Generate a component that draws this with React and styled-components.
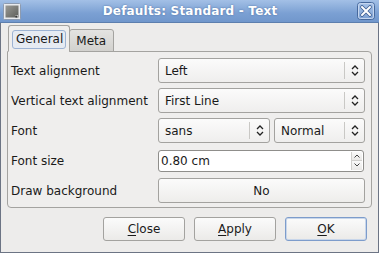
import React from "react";
import styled, { createGlobalStyle } from "styled-components";

const GlobalStyle = createGlobalStyle`
  html, body {
    margin: 0;
    padding: 0;
    background: #ecebea;
  }
  body {
    font-family: "DejaVu Sans", "Liberation Sans", sans-serif;
    font-size: 12px;
    color: #1a1a1a;
  }
`;

const Window = styled.div`
  width: 379px;
  height: 253px;
  box-sizing: border-box;
  border: 1px solid #6c7484;
  border-top: none;
  background: #edeceb;
  display: flex;
  flex-direction: column;
`;

const TitleBar = styled.div`
  height: 22px;
  margin: 0 -1px;
  background: linear-gradient(#a3c0e6, #7ba0d3 60%, #7197cc);
  border-bottom: 1px solid #5d7fae;
  display: flex;
  align-items: center;
  padding: 0 4px 0 3px;
  gap: 4px;
`;

const TitleText = styled.div`
  flex: 1;
  text-align: center;
  color: #fff;
  font-weight: bold;
  font-size: 12px;
  letter-spacing: 0.2px;
  text-shadow: 0 0 2px #4b6d9f;
  padding-left: 2px;
`;

const Body = styled.div`
  flex: 1;
  padding: 2px 6px 0 6px;
  display: flex;
  flex-direction: column;
`;

const TabBar = styled.div`
  display: flex;
  align-items: flex-end;
  padding-left: 1px;
  height: 27px;
  margin-bottom: -1px;
  position: relative;
  z-index: 1;
`;

const Tab = styled.div`
  box-sizing: border-box;
  height: ${(p) => (p.$active ? "27px" : "23px")};
  padding: ${(p) => (p.$active ? "4px 3px 2px 3px" : "4px 7px 0 6px")};
  border: 1px solid #a4a3a0;
  border-bottom: ${(p) => (p.$active ? "1px solid #efeeed" : "1px solid #a4a3a0")};
  border-radius: 3px 3px 0 0;
  background: ${(p) =>
    p.$active ? "#efeeed" : "linear-gradient(#e4e3e1, #d2d1ce)"};
  font-size: 12px;
  margin-left: ${(p) => (p.$active ? "0" : "-1px")};
`;

const TabFocus = styled.div`
  border: 1px solid #9db3d3;
  border-radius: 3px;
  background: #e6ebf2;
  padding: 1px 2px 2px 3px;
`;

const Panel = styled.div`
  box-sizing: border-box;
  height: 157px;
  border: 1px solid #a4a3a0;
  border-radius: 0 4px 4px 4px;
  background: #efeeed;
  padding: 6px 6px 0 3px;
  display: grid;
  grid-template-columns: 147px 1fr;
  grid-auto-rows: 25px;
  row-gap: 5px;
  align-items: center;
`;

const Label = styled.div`
  font-size: 12px;
  white-space: nowrap;
  padding-top: 1px;
`;

const Controls = styled.div`
  display: flex;
  gap: 4px;
`;

const Combo = styled.div`
  box-sizing: border-box;
  width: ${(p) => p.$w || "207px"};
  height: 25px;
  border: 1px solid #a3a29f;
  border-radius: 3px;
  background: linear-gradient(#fbfbfb, #efeeed);
  display: flex;
  align-items: center;
  font-size: 12px;
`;

const ComboText = styled.div`
  flex: 1;
  padding-left: 6px;
`;

const Sep = styled.div`
  width: 1px;
  height: 17px;
  background: #c9c8c5;
`;

const ArrowBox = styled.div`
  width: 19px;
  display: flex;
  justify-content: center;
  align-items: center;
`;

const Spin = styled.div`
  box-sizing: border-box;
  width: 206px;
  height: 22px;
  border: 1px solid #8f8e8b;
  border-radius: 3px;
  background: #fff;
  display: flex;
  align-items: stretch;
  font-size: 12px;
`;

const SpinText = styled.div`
  flex: 1;
  padding-left: 2px;
  display: flex;
  align-items: center;
`;

const SpinArrows = styled.div`
  width: 10px;
  margin: 1px 1px 1px 0;
  display: flex;
  flex-direction: column;
  border-left: 1px solid #d0cfcc;
`;

const SpinHalf = styled.div`
  flex: 1;
  display: flex;
  align-items: center;
  justify-content: center;
  background: linear-gradient(#fafafa, #e9e8e6);
  border-top: ${(p) => (p.$bottom ? "1px solid #d0cfcc" : "none")};
`;

const WideButton = styled.div`
  box-sizing: border-box;
  width: 207px;
  height: 25px;
  border: 1px solid #a3a29f;
  border-radius: 3px;
  background: linear-gradient(#fbfbfb, #eeedeb);
  display: flex;
  align-items: center;
  justify-content: center;
  font-size: 12px;
`;

const ButtonRow = styled.div`
  display: flex;
  justify-content: flex-end;
  gap: 9px;
  padding: 9px 5px 0 0;
`;

const Button = styled.div`
  box-sizing: border-box;
  width: 82px;
  height: 24px;
  border: 1px solid ${(p) => (p.$default ? "#7d9ccb" : "#a3a29f")};
  box-shadow: ${(p) => (p.$default ? "inset 0 0 0 1px #c8d6ea" : "none")};
  border-radius: 3px;
  background: linear-gradient(#fbfbfb, #ebeae8);
  display: flex;
  align-items: center;
  justify-content: center;
  font-size: 12px;
  u {
    text-decoration: underline;
    text-underline-offset: 2px;
  }
`;

const UpDown = () => (
  <svg width="8" height="11" viewBox="0 0 8 11">
    <path d="M1 4 L4 1 L7 4" fill="none" stroke="#222" strokeWidth="1.3" />
    <path d="M1 7 L4 10 L7 7" fill="none" stroke="#222" strokeWidth="1.3" />
  </svg>
);

const Chevron = ({ down }) => (
  <svg width="6" height="4" viewBox="0 0 6 4">
    <path
      d={down ? "M0.5 0.5 L3 3 L5.5 0.5" : "M0.5 3.5 L3 1 L5.5 3.5"}
      fill="none"
      stroke="#444"
      strokeWidth="1"
    />
  </svg>
);

const WindowIcon = () => (
  <svg width="18" height="17" viewBox="0 0 18 17">
    <defs>
      <linearGradient id="wi" x1="0" y1="0" x2="1" y2="1">
        <stop offset="0" stopColor="#9a9a96" />
        <stop offset="1" stopColor="#5d5e5a" />
      </linearGradient>
    </defs>
    <rect x="0.5" y="0.5" width="17" height="16" rx="1" fill="#e8eaee" stroke="#8d9bb0" />
    <rect x="2.5" y="2.5" width="13" height="12" fill="url(#wi)" />
    <path d="M12 12 L15 12 L15 15 Z" fill="#f0f0f0" />
    <rect x="12.5" y="12.5" width="2" height="2" fill="#333" />
  </svg>
);

const CloseIcon = () => (
  <svg width="18" height="18" viewBox="0 0 18 18">
    <defs>
      <linearGradient id="cl" x1="0" y1="0" x2="0" y2="1">
        <stop offset="0" stopColor="#a8c3e8" />
        <stop offset="1" stopColor="#7b9fd2" />
      </linearGradient>
    </defs>
    <rect x="0.5" y="0.5" width="17" height="17" rx="3" fill="url(#cl)" stroke="#46689c" />
    <rect x="1.5" y="1.5" width="15" height="15" rx="2" fill="none" stroke="#c5d6ef" />
    <path d="M5 5 L13 13 M13 5 L5 13" stroke="#3f5f92" strokeWidth="3.6" strokeLinecap="round" />
    <path d="M5 5 L13 13 M13 5 L5 13" stroke="#ffffff" strokeWidth="2" strokeLinecap="round" />
  </svg>
);

const ComboBox = ({ value, w }) => (
  <Combo $w={w}>
    <ComboText>{value}</ComboText>
    <Sep />
    <ArrowBox>
      <UpDown />
    </ArrowBox>
  </Combo>
);

const App = () => {
  return (
    <>
      <GlobalStyle />
      <Window>
        <TitleBar>
          <WindowIcon />
          <TitleText>Defaults: Standard - Text</TitleText>
          <CloseIcon />
        </TitleBar>
        <Body>
          <TabBar>
            <Tab $active>
              <TabFocus>General</TabFocus>
            </Tab>
            <Tab>Meta</Tab>
          </TabBar>
          <Panel>
            <Label>Text alignment</Label>
            <ComboBox value="Left" />

            <Label>Vertical text alignment</Label>
            <ComboBox value="First Line" />

            <Label>Font</Label>
            <Controls>
              <ComboBox value="sans" w="112px" />
              <ComboBox value="Normal" w="91px" />
            </Controls>

            <Label>Font size</Label>
            <Spin>
              <SpinText>0.80 cm</SpinText>
              <SpinArrows>
                <SpinHalf>
                  <Chevron />
                </SpinHalf>
                <SpinHalf $bottom>
                  <Chevron down />
                </SpinHalf>
              </SpinArrows>
            </Spin>

            <Label>Draw background</Label>
            <WideButton>No</WideButton>
          </Panel>
          <ButtonRow>
            <Button>
              <u>C</u>lose
            </Button>
            <Button>
              <u>A</u>pply
            </Button>
            <Button $default>
              <u>O</u>K
            </Button>
          </ButtonRow>
        </Body>
      </Window>
    </>
  );
};

export default App;
